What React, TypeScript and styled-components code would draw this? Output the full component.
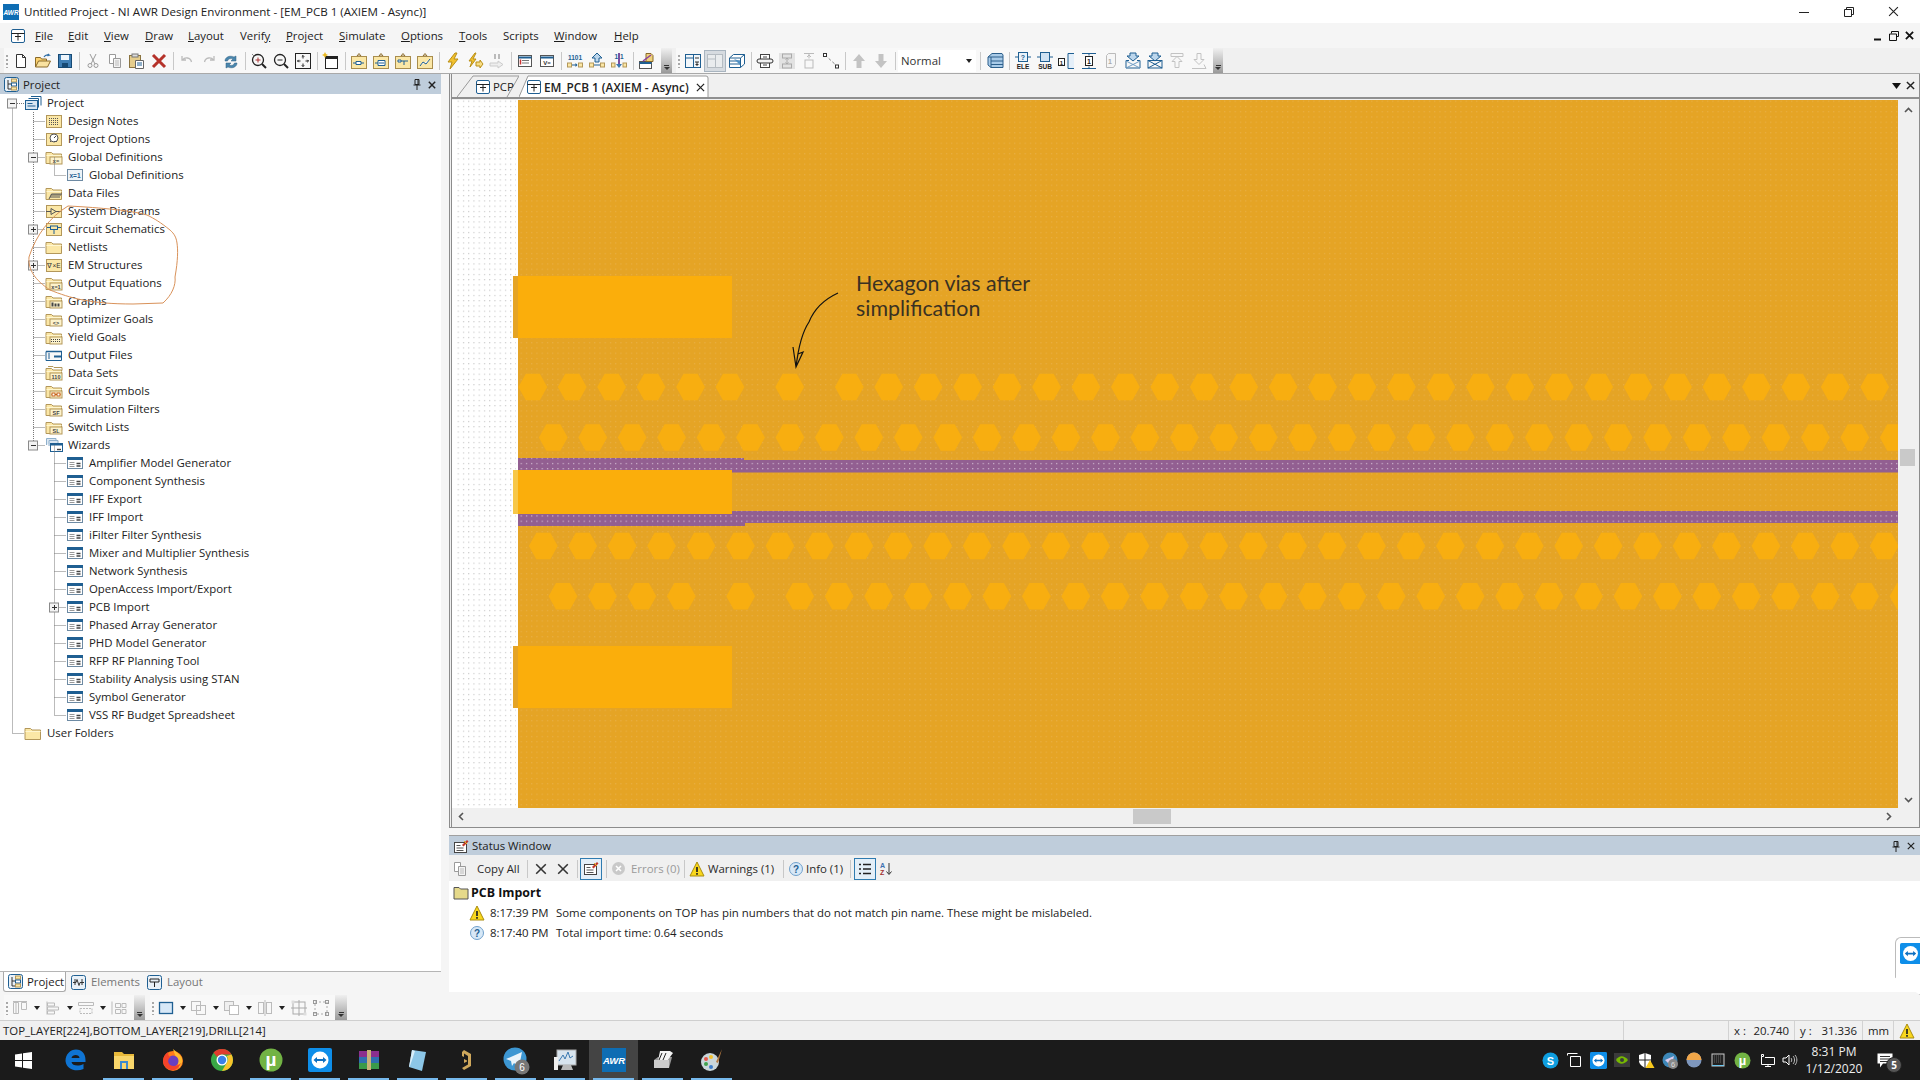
import React from "react";
import styled, { createGlobalStyle } from "styled-components";

const FONT = `"Open Sans", "Noto Sans", sans-serif`;

const Global = createGlobalStyle`
  html, body { margin: 0; padding: 0; background: #fff; overflow: hidden; }
  #root { width: 1920px; height: 1080px; }
  * { box-sizing: border-box; }
`;

const Page = styled.div`
  width: 1920px; height: 1080px; display: flex; flex-direction: column;
  font: 11.4px/16px ${FONT}; color: #1c1c1c; background: #f5f5f5;
`;
const IconSvg = styled.svg`display: block; flex: none;`;
const Tiny = styled.text<{ $s?: number; $w?: number }>`
  font-family: "Liberation Sans", sans-serif;
  font-size: ${(p) => p.$s ?? 6}px; font-weight: ${(p) => p.$w ?? 700};
`;
const S: React.FC<{ w?: number; h?: number; children?: React.ReactNode }> = ({ w = 16, h = 16, children }) => (
  <IconSvg width={w} height={h} viewBox={`0 0 ${w} ${h}`} fill="none">{children}</IconSvg>
);

/* ---------- title / menu ---------- */
const TitleBar = styled.header`height: 23px; background: #fff; display: flex; align-items: center; padding-left: 3px; flex: none;`;
const TitleText = styled.span`margin-left: 5px; font-size: 11.6px; white-space: nowrap; color: #222;`;
const WinControls = styled.div`margin-left: auto; margin-right: 4px; display: flex; align-items: center;`;
const WinBtn = styled.span`width: 45px; display: flex; justify-content: center;`;
const MenuBar = styled.nav`height: 25px; background: #f5f5f5; display: flex; align-items: center; padding-left: 10px; flex: none;`;
const MenuItem = styled.span<{ $w: number }>`width: ${(p) => p.$w}px; white-space: nowrap; flex: none;`;
const MenuIcon = styled.span`width: 25px; flex: none;`;
const MdiControls = styled.div`margin-left: auto; margin-right: 6px; display: flex; gap: 6px; align-items: center;`;

/* ---------- toolbars ---------- */
const ToolRow = styled.div`height: 26px; background: #f0f0f0; display: flex; align-items: stretch; padding-left: 4px; flex: none; border-bottom: 1px solid #a9a9a9;`;
const ToolBand = styled.div<{ $ml?: number }>`display: flex; align-items: center; background: #f8f8f8; margin-left: ${(p) => p.$ml ?? 0}px; height: 25px;`;
const Grip = styled.span`
  width: 6px; height: 14px; flex: none;
  background-image: radial-gradient(circle, #a8a8a8 1px, transparent 1.2px);
  background-size: 6px 4px;
`;
const ToolBtn = styled.span<{ $active?: boolean; $hi?: boolean }>`
  width: 22px; height: 22px; flex: none; display: flex; align-items: center; justify-content: center;
  ${(p) => p.$active ? "background: #d6dbe0; border: 1px solid #a8b4bf;" : ""}
  ${(p) => p.$hi ? "background: #e4eff8; border: 1px solid #2f7bb0;" : ""}
`;
const DropBtn = styled.span`width: 33px; height: 22px; flex: none; display: flex; align-items: center; padding-left: 1px; gap: 5px;`;
const DropArrow = styled.i`width: 0; height: 0; border: 3px solid transparent; border-top: 4px solid #222; border-bottom: 0; flex: none;`;
const Sep = styled.span<{ $w?: number }>`
  width: ${(p) => p.$w ?? 6}px; height: 18px; flex: none; position: relative;
  background: linear-gradient(#c8c8c8, #c8c8c8) center/1px 100% no-repeat;
`;
const Overflow = styled.span<{ $w?: number }>`
  width: ${(p) => p.$w ?? 11}px; height: 25px; flex: none; margin-left: 3px;
  background: linear-gradient(#f0f0f0, #9a9a9a); display: flex; flex-direction: column; align-items: center; justify-content: flex-end; padding-bottom: 3px; gap: 1px;
  &::before { content: ""; width: 5px; height: 1px; background: #333; }
  &::after { content: ""; width: 0; height: 0; border: 3px solid transparent; border-top: 3px solid #333; border-bottom: 0; }
`;
const Combo = styled.span`
  width: 78px; height: 22px; background: #fff; flex: none; display: flex; align-items: center; padding: 0 4px 0 3px; justify-content: space-between; color: #333;
`;

/* ---------- workspace ---------- */
const Workspace = styled.main`flex: 1; display: flex; min-height: 0;`;
const LeftColumn = styled.section`width: 441px; display: flex; flex-direction: column; flex: none;`;
const DockHeader = styled.div`
  height: 20px; background: #bfcddb; display: flex; align-items: center; padding: 1px 5px 0 3px; gap: 3px; flex: none; color: #222;
`;
const DockCtl = styled.span`margin-left: auto; display: flex; align-items: center; gap: 7px;`;
const Tree = styled.div`flex: 1; background: #fff; position: relative; border-bottom: 1px solid #b5b5b5;`;
const TreeLines = styled.svg`position: absolute; left: 0; top: 0; pointer-events: none;`;
const TreeRow = styled.div<{ $level: number }>`
  height: 18px; display: flex; align-items: center; gap: 5px; padding-left: ${(p) => 24 + p.$level * 21}px; color: #222; white-space: nowrap;
`;
const PanelTabs = styled.div`height: 23px; display: flex; align-items: flex-start; padding-left: 3px; flex: none; background: #f5f5f5;`;
const PanelTab = styled.span<{ $active?: boolean; $w: number }>`
  width: ${(p) => p.$w}px; height: 20px; display: flex; align-items: center; flex: none;
  color: ${(p) => (p.$active ? "#1c1c1c" : "#777")};
  gap: ${(p) => (p.$active ? 3 : 4)}px; padding-left: ${(p) => (p.$active ? 3 : 4)}px;
  ${(p) => p.$active ? "background: #fff; border: 1px solid #aaa; border-top: 0; border-radius: 0 0 3px 3px;" : ""}
`;
const BottomTools = styled.div`height: 25px; display: flex; align-items: center; padding-left: 4px; flex: none;`;

const RightColumn = styled.section`flex: 1; margin-left: 8px; display: flex; flex-direction: column; min-width: 0;`;
const DocPane = styled.div`
  height: 754px; flex: none; border-left: 3px double #8c8c8c; border-right: 1px solid #8c8c8c; border-bottom: 1px solid #8c8c8c; display: flex; flex-direction: column; background: #f0f0f0;
`;
const TabStrip = styled.div`height: 25px; flex: none; display: flex; padding-left: 5px; align-items: flex-end; border-bottom: 2px solid #8f8f8f; background: #f0f0f0;`;
const DocTab = styled.div<{ $w: number; $active?: boolean }>`
  position: relative; width: ${(p) => p.$w}px; height: 22px; flex: none; display: flex; align-items: center;
  font-weight: ${(p) => (p.$active ? 600 : 400)}; color: #222; white-space: nowrap;
  font-size: ${(p) => (p.$active ? 11.8 : 11.4)}px;
  padding: 2px 0 0 ${(p) => (p.$active ? 7 : 18)}px;
`;
const TabOutline = styled.svg`position: absolute; left: 0; top: 0; z-index: 0;`;
const TabContent = styled.span`position: relative; display: flex; align-items: center; gap: 2px;`;
const TabClose = styled.span`margin-left: 5px; display: flex;`;
const StripCtl = styled.span`margin-left: auto; display: flex; align-items: center; gap: 5px; padding: 0 4px 0 0; align-self: center;`;
const DocBody = styled.div`display: flex; height: 708px; flex: none; margin-top: 1px;`;
const CanvasWrap = styled.div`position: relative; width: 1446px; height: 708px; flex: none; overflow: hidden; background: #fff;`;
const Note = styled.div`
  position: absolute; left: 404px; top: 171px; font: 400 21.4px/25px "Lato", "Noto Sans", sans-serif; color: #3a3122; white-space: nowrap;
`;
const VScroll = styled.div`flex: 1; display: flex; flex-direction: column; align-items: center; justify-content: space-between; padding: 6px 0 4px; position: relative;`;
const VThumb = styled.span`position: absolute; left: 2px; top: 349px; width: 15px; height: 17px; background: #c9c9c9;`;
const HScroll = styled.div`height: 17px; flex: none; display: flex; align-items: center; justify-content: space-between; padding: 0 26px 0 5px; position: relative;`;
const HThumb = styled.span`position: absolute; left: 681px; top: 1px; width: 38px; height: 15px; background: #c9c9c9;`;

const StatusPane = styled.div`margin-top: 7px; height: 157px; flex: none; display: flex; flex-direction: column; background: #fff; border-top: 1px solid #a0a0a0;`;
const StatusHeader = styled.div`height: 19px; flex: none; background: #bfcddb; display: flex; align-items: center; padding: 1px 5px 0 4px; gap: 3px; color: #222;`;
const StatusTools = styled.div`height: 26px; flex: none; background: #f0f0f0; display: flex; align-items: center; padding: 1px 0 0 3px; color: #333;`;
const StatBtn = styled.span<{ $w: number; $muted?: boolean; $gap?: number; $center?: boolean }>`
  width: ${(p) => p.$w}px; flex: none; display: flex; align-items: center; gap: ${(p) => p.$gap ?? 3}px; white-space: nowrap; color: ${(p) => (p.$muted ? "#9a9a9a" : "#2a2a2a")};
  ${(p) => (p.$center ? "justify-content: center;" : "")}
`;
const LogBody = styled.div`flex: 1; padding: 2px 0 0 4px;`;
const LogGroup = styled.div`height: 20px; display: flex; align-items: center; gap: 2px; font-weight: 700; color: #111; font-size: 12.4px;`;
const LogRow = styled.div`height: 20px; display: flex; align-items: center; padding-left: 16px; white-space: nowrap; color: #222;`;
const LogTime = styled.span`width: 66px; margin-left: 5px; flex: none;`;
const SideTab = styled.div`
  position: absolute; right: 0; top: 937px; width: 25px; height: 58px; background: #fff; border: 1px solid #bbb; border-right: 0; border-radius: 6px 0 0 0; padding: 5px 0 0 4px;
  clip-path: polygon(0 0, 100% 0, 100% 100%, 0 70%);
`;

/* ---------- status + task bars ---------- */
const StatusBar = styled.footer`height: 20px; flex: none; background: #f0f0f0; border-top: 1px solid #cfcfcf; display: flex; align-items: center; padding-left: 3px; color: #222;`;
const StatusMsg = styled.span`flex: 1; white-space: nowrap;`;
const StatusCell = styled.span<{ $w: number }>`
  width: ${(p) => p.$w}px; height: 100%; flex: none; border-left: 1px solid #d2d2d2; display: flex; align-items: center; justify-content: space-between; padding: 0 5px;
`;
const TaskBar = styled.footer`height: 40px; flex: none; background: #1b1b1b; display: flex; align-items: stretch; color: #fff;`;
const StartBtn = styled.span`width: 50px; display: flex; align-items: center; justify-content: center; padding-right: 4px; flex: none;`;
const TaskSlot = styled.span<{ $open?: boolean; $cur?: boolean }>`
  width: 49px; flex: none; display: flex; align-items: center; justify-content: center; position: relative;
  background: ${(p) => (p.$cur ? "#444" : "transparent")};
  ${(p) => p.$open ? `&::after { content: ""; position: absolute; left: 4px; right: 4px; bottom: 0; height: 2px; background: #76b9ed; }` : ""}
`;
const Tray = styled.div`margin-left: auto; display: flex; align-items: center; flex: none;`;
const TraySlot = styled.span`width: 24px; display: flex; justify-content: center;`;
const Clock = styled.span`width: 64px; text-align: center; font-size: 12px; line-height: 17px; color: #eee;`;
const Notify = styled.span`width: 38px; margin-right: 16px; display: flex; justify-content: center; position: relative;`;
const NotifyBadge = styled.span`
  position: absolute; left: 20px; top: 4px; width: 16px; height: 16px; border-radius: 50%; background: #555; border: 1px solid #222; font-size: 10px; line-height: 14px; text-align: center; color: #fff; font-weight: 700;
`;

/* ---------- small icons ---------- */
const B = "#1f5f92";
const TAN = "#b3975a";
const Y = "#fbe7a6";
const G = "#9a9a9a";

const FolderBase: React.FC<{ children?: React.ReactNode; stack?: boolean }> = ({ children, stack }) => (
  <S w={18} h={16}>
    {stack && <path d="M3 1.500h5l1 1h8v3" stroke={TAN} />}
    <path d="M1 3.500h5.500l1.500 1.500h8.500v9.500H1z" fill={Y} stroke={TAN} />
    <path d="M1.500 6.500h15" stroke="#fff6d0" />
    {children}
  </S>
);
const TanBox: React.FC<{ children?: React.ReactNode }> = ({ children }) => (
  <S w={18} h={16}><rect x="1.500" y="2.500" width="15" height="12" fill={Y} stroke={TAN} />{children}</S>
);
const LabelBox: React.FC<{ t: string }> = ({ t }) => (
  <><rect x="5" y="8" width="12" height="7" fill="#fdf3cc" stroke={TAN} /><Tiny x="11" y="13.500" textAnchor="middle" $s={5.500} fill="#444">{t}</Tiny></>
);
const WizardIcon = () => (
  <S w={18} h={16}>
    <rect x="1.500" y="2.500" width="15" height="11" fill="#fff" stroke="#6d8aa3" />
    <rect x="1" y="2" width="16" height="3" fill={B} />
    <path d="M3.500 7.500h5M3.500 9.500h5M3.500 11.500h5" stroke="#999" />
    <path d="M10.500 8.500h4M10.500 11h4" stroke="#444" strokeWidth="1.400" />
  </S>
);
const tree: Record<string, React.ReactElement> = {
  root: <S w={18} h={16}><path d="M7 1.500h10v9M4.500 3.500h10v9" stroke={B} /><rect x="1.500" y="5.500" width="12" height="9" fill="#d9e6f2" stroke={B} /><path d="M3.500 8.500h5M3.500 11h8" stroke={B} /></S>,
  notes: <TanBox><path d="M4 5.500h10M4 7.500h10M4 9.500h10M4 11.500h10" stroke="#555" strokeDasharray="1 1" /></TanBox>,
  opts: <TanBox><circle cx="9" cy="7" r="4" stroke="#555" fill="#fff" /><path d="M5 10.500h8" stroke="#555" strokeDasharray="1 1" /><path d="M9 7l2-2" stroke="#444" /></TanBox>,
  gdef: <FolderBase><LabelBox t="x=" /></FolderBase>,
  xeq: <S w={18} h={16}><rect x="1.500" y="2.500" width="15" height="11" fill="#eef3f8" stroke="#6d8aa3" /><Tiny x="9" y="10.500" textAnchor="middle" $s={6.500} fill={B}>x=1</Tiny></S>,
  data: <FolderBase><path d="M4 14l2.500-5H17M5 12h10M6 10h10" stroke="#555" /></FolderBase>,
  sys: <TanBox><path d="M1 8.500h5M11 8.500h5M6 5.500v6l5-3z" stroke="#555" /></TanBox>,
  sch: <TanBox><rect x="5.500" y="5" width="7" height="3.500" stroke={B} /><path d="M2 6.500h3.500M12.500 6.500H16M9 8.500V13" stroke={B} /></TanBox>,
  net: <FolderBase />,
  em: <TanBox><Tiny x="9" y="11" textAnchor="middle" $s={6.500} $w={400} fill="#333">∇×E</Tiny></TanBox>,
  oeq: <FolderBase><LabelBox t="x=1" /></FolderBase>,
  gra: <FolderBase><rect x="5" y="8" width="12" height="7" fill="#fdf3cc" stroke={TAN} /><path d="M7.500 13.500v-4M10.500 13.500v-3M13.500 13.500v-3" stroke="#444" strokeWidth="2" /></FolderBase>,
  opt: <FolderBase><LabelBox t="<>" /></FolderBase>,
  yld: <FolderBase><rect x="5" y="8" width="12" height="7" fill="#fdf3cc" stroke={TAN} /><path d="M6 10.500h10M6 12.500h10" stroke="#444" strokeDasharray="1 1" /></FolderBase>,
  out: <S w={18} h={16}><path d="M1 4.500h15.500v9H1z" fill="#f7f7f7" stroke={B} /><path d="M1 4.500h16" stroke={B} strokeWidth="1.500" /><path d="M4 6v6" stroke={B} /><rect x="9" y="8.500" width="7" height="2" fill={B} /></S>,
  sets: <FolderBase stack><LabelBox t="110" /></FolderBase>,
  sym: <FolderBase><rect x="5" y="8" width="12" height="7" fill="#fdf3cc" stroke={TAN} /><path d="M6.500 11.500h9" stroke="#c4611a" strokeWidth="1" /><rect x="7" y="10" width="3" height="3" fill="#fff" stroke="#c4611a" /><rect x="12" y="10" width="3" height="3" fill="#fff" stroke="#c4611a" /></FolderBase>,
  sf: <FolderBase><LabelBox t="SF" /></FolderBase>,
  sl: <FolderBase><LabelBox t="SL" /></FolderBase>,
  wiz: <S w={18} h={16}><path d="M1.500 8V1.500H11V4M4 9V3.500h9V6" stroke="#8fb0cc" fill="#dbe7f2" /><rect x="5.500" y="6.500" width="12" height="8" fill="#fff" stroke={B} /><rect x="5" y="6" width="13" height="2.500" fill={B} /><path d="M12 12.500h4" stroke="#444" strokeWidth="1.400" /></S>,
  item: <WizardIcon />,
  user: <FolderBase />,
};

const DocBlue = () => (
  <S><rect x="1.500" y="1.500" width="13" height="13" rx="1.500" fill="#fff" stroke={B} /><path d="M1.500 5.500h13M8 5.500v7M5 8.500h6" stroke="#222" /></S>
);
const ProjectIcon = () => (
  <S w={17} h={17}><rect x="1.500" y="1.500" width="14" height="14" rx="2" fill="#e9f1f8" stroke={B} /><path d="M5 4v9h3M5 8h3" stroke="#333" /><rect x="8.500" y="3" width="5" height="3" fill={Y} stroke={TAN} /><rect x="8.500" y="7" width="5" height="3" fill="#fff" stroke={B} /><rect x="8.500" y="11" width="5" height="3" fill={Y} stroke={TAN} /></S>
);
const ElementsIcon = () => (
  <S w={17} h={17}><rect x="1.500" y="1.500" width="14" height="14" rx="2" fill="#e9f1f8" stroke={B} /><path d="M3 8.500h3l1-3 2 6 1-3h4M5 5v6M12 5v6" stroke="#333" /></S>
);
const LayoutIcon = () => (
  <S w={17} h={17}><rect x="1.500" y="1.500" width="14" height="14" rx="2" fill="#e9f1f8" stroke={B} /><path d="M4 5h9v3H4zM8.500 8v5" stroke="#222" /></S>
);
const YBox: React.FC<{ d: string }> = ({ d }) => (
  <S w={18} h={18}>
    <path d="M9 1.500l2 2.500H7z" fill="#fff" stroke="#8a6a2a" />
    <rect x="1.500" y="4.500" width="15" height="12" fill={Y} stroke="#a98d4d" />
    <path d={d} stroke={B} fill="#fff" />
  </S>
);
const Bits: React.FC<{ t: string; tone?: string }> = ({ t, tone = B }) => (
  <S w={18} h={18}>
    <rect x="1" y="1" width="16" height="7.500" fill="#f3f7fb" />
    <Tiny x="9" y="7.500" textAnchor="middle" $s={6.500} fill={tone}>{t}</Tiny>
    <rect x="1.500" y="11" width="4" height="4" fill={Y} stroke={TAN} />
    <path d="M6 13h5" stroke={B} /><path d="M9.500 11l2 2-2 2" fill={B} />
    <rect x="12.500" y="11" width="4" height="4" fill={Y} stroke={TAN} />
  </S>
);

const tb: Record<string, React.ReactElement> = {
  new: <S><path d="M3.500 1.500h6l3 3v10h-9z" fill="#fff" stroke="#333" /><path d="M9.500 1.500v3h3" stroke="#333" /></S>,
  open: <S w={18}><path d="M1.500 14V4.500h5l1 1.500h5v2" fill="#fcd26f" stroke="#8a6a2a" /><path d="M1.500 14l3-6h12l-3 6z" fill="#f9e2a0" stroke="#8a6a2a" /><path d="M10 4c1-2 3-2.500 5-2l-1-1M15 2l-1.500 1" stroke="#2f6ea8" strokeWidth="1.200" /></S>,
  save: <S><rect x="1.500" y="1.500" width="13" height="13" fill="#3f7fb5" stroke="#174a74" /><rect x="4" y="2" width="8" height="5" fill="#eef5fb" /><rect x="5" y="10" width="6" height="4.500" fill="#174a74" /></S>,
  cut: <S><circle cx="5" cy="12.500" r="2" stroke={G} /><circle cx="11" cy="12.500" r="2" stroke={G} /><path d="M6 11l5-10M10 11L5 1" stroke={G} /></S>,
  copy: <S><path d="M2.500 1.500h6v9h-6z" fill="#fff" stroke={G} /><path d="M6.500 5.500h7v9h-7z" fill="#f3f3f3" stroke={G} /><path d="M8 8h4M8 10h4M8 12h4" stroke="#bbb" /></S>,
  paste: <S w={18}><rect x="1.500" y="2.500" width="11" height="12" fill="#e5cd8d" stroke="#8a7340" /><rect x="4" y="1" width="6" height="3" fill="#ddd" stroke="#777" /><path d="M7.500 7.500h8v8h-8z" fill="#fff" stroke="#666" /><path d="M9 10h5M9 12h5" stroke={B} /></S>,
  del: <S w={18} h={18}><path d="M3 3l12 12M15 3L3 15" stroke="#b5322a" strokeWidth="3" /></S>,
  undo: <S><path d="M3 3v4h4M3.500 7c2-3 8-3 9 2" stroke="#bbb" strokeWidth="1.300" /></S>,
  redo: <S><path d="M13 3v4H9M12.500 7c-2-3-8-3-9 2" stroke="#bbb" strokeWidth="1.300" /></S>,
  refresh: <S w={18}><path d="M3 8c0-4 5-6 9-4l2-1v5h-5l2-2c-3-1-5 0-5.500 2zM15 10c0 4-5 6-9 4l-2 1v-5h5l-2 2c3 1 5 0 5.500-2z" fill="#4a86ad" stroke="#2f5e80" strokeWidth=".5" /></S>,
  zoomA: <S w={18} h={18}><circle cx="8" cy="8" r="5.500" stroke="#222" strokeWidth="1.300" /><path d="M12 12l4 4" stroke="#222" strokeWidth="2" /><path d="M5.500 8h5M8 5.500v5" stroke="#a33" /><path d="M2 2l3 3" stroke="#888" /></S>,
  zoomO: <S w={18} h={18}><circle cx="8" cy="8" r="5.500" stroke="#222" strokeWidth="1.300" /><path d="M12 12l4 4" stroke="#222" strokeWidth="2" /><path d="M5.500 8h5" stroke="#222" /></S>,
  fit: <S w={18} h={18}><rect x="1.500" y="1.500" width="15" height="15" stroke="#222" /><path d="M9 3.500v3M7.800 4.700L9 3.500l1.200 1.200M9 14.500v-3M7.800 13.300L9 14.500l1.200-1.200M3.500 9h3M4.700 7.800L3.500 9l1.200 1.200M14.500 9h-3M13.300 7.800l1.200 1.200-1.200 1.200" stroke="#222" /></S>,
  newLay: <S w={18} h={18}><rect x="3.500" y="4.500" width="12" height="12" fill="#fff" stroke="#222" /><path d="M3.500 6h12" stroke="#222" strokeWidth="2" /><path d="M3 0l1 2 2 1-2 1-1 2-1-2-2-1 2-1z" fill="#e9b821" /></S>,
  y1: <YBox d="M3 11h3M6 9.500h5v3H6zM11 11h3" />,
  y2: <YBox d="M3 11h3M6 8.500h7v5H6zM7 11h5" />,
  y3: <YBox d="M4 8h3v2H4zM7 9h7M10 9v4" />,
  y4: <YBox d="M4 14l3-4 3 2 4-5" />,
  bolt: <S w={18} h={18}><path d="M11 1L4 10h4l-2 7 8-10h-4l3-6z" fill="#f2c12e" stroke="#b98f17" /></S>,
  boltA: <S w={18} h={18}><path d="M9 1L3 9h3l-2 6 6-8H7l3-6z" fill="#f2c12e" stroke="#b98f17" /><path d="M10 10h4v-2l3 4-3 4v-2h-4z" fill="#f7dc84" stroke="#b98f17" /></S>,
  pause: <S w={18} h={18}><path d="M7 2v5M11 2v5" stroke="#bbb" strokeWidth="2" /><path d="M2 11h8v-2l5 3.500-5 3.500v-2H2z" fill="#eee" stroke="#ccc" /></S>,
  prop: <S w={18}><rect x="2.500" y="2.500" width="13" height="11" fill="#fff" stroke="#555" /><path d="M2.500 4.500h13" stroke={B} strokeWidth="2" /><path d="M6 7.500h7M6 10h7" stroke="#777" /><path d="M4.500 6.500v5" stroke="#c33" strokeWidth="1.500" /></S>,
  veq: <S w={18}><rect x="2.500" y="2.500" width="13" height="11" fill="#fff" stroke="#555" /><path d="M2.500 4.500h13" stroke={B} strokeWidth="2" /><Tiny x="9" y="11.500" textAnchor="middle" $s={6} fill="#333">V=</Tiny></S>,
  b1: <Bits t="1101" />,
  b2: <S w={18} h={18}><path d="M9 1l5 5h-3v4H7V6H4z" fill="#bcd6ec" stroke={B} /><rect x="1.500" y="11" width="4" height="4" fill={Y} stroke={TAN} /><path d="M6 13h6" stroke={B} /><rect x="12.500" y="11" width="4" height="4" fill={Y} stroke={TAN} /></S>,
  b3: <S w={18} h={18}><Tiny x="9" y="7" textAnchor="middle" $s={6.500} fill={B}>1 1</Tiny><path d="M9 1v11" stroke="#7a4fa0" strokeWidth="2" /><path d="M6 12l3 4 3-4z" fill="#3a78b0" /><rect x="1.500" y="11" width="3.500" height="4" fill={Y} stroke={TAN} /><rect x="13" y="11" width="3.500" height="4" fill={Y} stroke={TAN} /></S>,
  wand: <S w={18} h={18}><rect x="1.500" y="9.500" width="12" height="7" fill="#fff" stroke="#555" /><path d="M1.500 11h12" stroke={B} strokeWidth="2" /><path d="M8 1.500h5l2 2v6H8z" fill="#f0d27c" stroke="#8a6a2a" /><path d="M5 9l8-6" stroke="#8a3fa0" strokeWidth="1.500" /></S>,
  a1: <S w={18}><rect x="1.500" y="1.500" width="15" height="13" fill="#f2f7fb" stroke={B} /><path d="M1.500 5h8v9.500M9.500 5V1.500" stroke={B} /><path d="M11 5h4M11 9h4M13 9v4M11.500 11.500h3" stroke="#333" /></S>,
  a2: <S w={18}><rect x="1.500" y="1.500" width="15" height="13" fill="#e9ecee" stroke="#b5bcc2" /><path d="M1.500 6h8v8.500M9.500 6V1.500" stroke="#b5bcc2" /></S>,
  a3: <S w={18}><path d="M1.500 5l4-3.500h11V11l-4 3.500h-11z" fill="#fff" stroke={B} /><path d="M1.500 5h11v9.500M12.500 5l4-3.500" stroke={B} /><path d="M2 8h10M2 11h10" stroke={B} /><path d="M6 6l6 6v-4z" fill="#4f90c4" /></S>,
  b4: <S w={18}><rect x="4.500" y="1.500" width="9" height="5" fill="#fff" stroke="#444" /><rect x="4.500" y="9.500" width="9" height="5" fill="#fff" stroke="#444" /><rect x="1" y="6" width="16" height="4" rx="2" fill="#f3f3f3" stroke="#333" /><path d="M7 4h4M7 12h4" stroke="#444" /></S>,
  b5: <S w={18} h={18}><rect x="1" y="1" width="16" height="16" fill="#e2e2e2" /><rect x="4.500" y="2" width="9" height="4" stroke="#aaa" /><rect x="4.500" y="12" width="9" height="4" stroke="#aaa" /><path d="M9 6v6M7.500 7.500L9 6l1.500 1.500M7.500 10.500L9 12l1.500-1.500" stroke="#aaa" /></S>,
  b6: <S w={18} h={18}><path d="M4 1.500h10M9 1.500v5" stroke="#bbb" /><path d="M7 5l2-2 2 2" stroke="#bbb" /><rect x="5" y="8" width="8" height="8" stroke="#bbb" /></S>,
  b7: <S w={18} h={18}><path d="M3 3l13 12" stroke="#888" strokeDasharray="3 2" /><rect x="1.500" y="1.500" width="3" height="3" fill="#fff" stroke="#333" /><rect x="13.500" y="13" width="3" height="3" fill="#fff" stroke="#333" /></S>,
  up: <S w={18} h={18}><path d="M9 2l6 7h-3.500v7h-5V9H3z" fill="#c3c3c3" /></S>,
  down: <S w={18} h={18}><path d="M9 16l6-7h-3.500V2h-5v7H3z" fill="#c3c3c3" /></S>,
  db: <S w={18} h={18}><path d="M2 5l4-3.500h10L17 3v12.500H5L2 13z" fill="#a9cbe8" stroke="#2c5f8b" /><path d="M5 5v10.500M2 5h15M5 9h12M5 12.500h12" stroke="#2c5f8b" /></S>,
  ele: <S w={18} h={20}><rect x="4.500" y="1.500" width="9" height="9" fill="#eaf2f9" stroke={B} /><path d="M1 6h3.500M13.500 6H17" stroke={B} /><Tiny x="9" y="8.500" textAnchor="middle" $s={7} fill={B}>?</Tiny><Tiny x="9" y="18" textAnchor="middle" $s={6.500} fill="#222">ELE</Tiny></S>,
  sub: <S w={18} h={20}><rect x="4.500" y="1.500" width="9" height="9" fill="#cfe2f3" stroke={B} /><path d="M1 6h3.500M13.500 6H17" stroke={B} /><Tiny x="9" y="18" textAnchor="middle" $s={6.500} fill="#222">SUB</Tiny></S>,
  p1: <S w={20} h={18}><rect x="1.500" y="6.500" width="6" height="7" fill="#fff" stroke="#222" /><Tiny x="4.500" y="12.500" textAnchor="middle" $s={6} fill="#222">1</Tiny><path d="M17 1.500h-6v15h6" fill="#e4eff9" stroke={B} /></S>,
  p2: <S w={18} h={18}><path d="M2 1.500h14M2 16.500h14M9 1.500v2M9 14.500v2" stroke={B} /><rect x="5.500" y="4.500" width="7" height="9" fill="#fff" stroke="#222" /><Tiny x="9" y="12" textAnchor="middle" $s={7} fill="#222">1</Tiny></S>,
  p3: <S w={18} h={18}><path d="M4.500 3.500l2-2h7v11l-2 3h-7z" fill="#f6f6f6" stroke="#bbb" /><Tiny x="8" y="12" textAnchor="middle" $s={7} fill="#aaa">1</Tiny></S>,
  ex1: <S w={18} h={18}><path d="M6 1h6v3h3l-6 5-6-5h3z" fill="#bcd6ec" stroke={B} /><path d="M2 8.500v7.500h14V8.500h-3M2 8.500h3" stroke={B} /><path d="M2 16l14-7M2 9l14 7" stroke="#6d9cc4" /></S>,
  ex2: <S w={18} h={18}><path d="M6 1h6v3h3l-6 5-6-5h3z" fill="#bcd6ec" stroke={B} /><rect x="2" y="8.500" width="14" height="7.500" stroke={B} /><path d="M2 16l14-7.500M2 8.500l14 7.500" stroke={B} /></S>,
  ex3: <S w={18} h={18}><path d="M3 1.500h12v3H3zM9 4.500l5 5h-3v6H7v-6H4z" stroke="#c3c3c3" /></S>,
  ex4: <S w={18} h={18}><path d="M7 1.500h4v6h3l-5 5-5-5h3zM2 16.500h14l-2-4" stroke="#c3c3c3" /></S>,
  s1: <S w={18}><path d="M2.500 2.500v11h5v-11zM5 2.500v11M10.500 2.500v7h5v-7zM2 1.500h14" stroke="#bbb" /></S>,
  s2: <S w={18}><path d="M3 1.500v13M3.500 3h7v3h-7zM3.500 7h11v3h-11zM3.500 11h7v3h-7z" stroke="#bbb" /></S>,
  s3: <S w={18}><path d="M1.500 2.500h15v3h-15z" stroke="#bbb" /><path d="M3 8.500h12v5H3z" stroke="#bbb" strokeDasharray="2 1" /></S>,
  s4: <S w={18}><path d="M1 1.500v13M4.500 3.500h5v4h-5zM11 3.500h4v4h-4zM4.500 9.500h5v4h-5zM11 9.500h4v4h-4z" stroke="#bbb" /></S>,
  r1: <S w={18}><rect x="2.500" y="2.500" width="13" height="11" fill="#d7e8f7" stroke={B} strokeWidth="1.300" /></S>,
  r2: <S w={18}><rect x="1.500" y="1.500" width="9" height="9" stroke="#bbb" /><rect x="6.500" y="5.500" width="9" height="9" stroke="#bbb" /></S>,
  r3: <S w={18}><rect x="1.500" y="1.500" width="9" height="9" fill="#efefef" stroke="#bbb" /><rect x="6.500" y="5.500" width="9" height="9" fill="#fff" stroke="#bbb" /></S>,
  r4: <S w={18}><rect x="2.500" y="2.500" width="5" height="11" stroke="#bbb" /><rect x="10.500" y="2.500" width="5" height="11" stroke="#bbb" /><path d="M9 0v16" stroke="#bbb" /></S>,
  r5: <S w={18} h={18}><rect x="3" y="3" width="12" height="12" stroke="#aaa" /><path d="M9 1v16M1 9h16" stroke="#aaa" /><rect x="1.500" y="1.500" width="3" height="3" fill="#ddd" /><rect x="13.500" y="13.500" width="3" height="3" fill="#ddd" /></S>,
  r6: <S w={18} h={18}><rect x="3" y="3" width="12" height="12" stroke="#aaa" strokeDasharray="2 2" /><rect x="1.500" y="1.500" width="3" height="3" stroke="#999" /><rect x="13.500" y="1.500" width="3" height="3" stroke="#999" /><rect x="1.500" y="13.500" width="3" height="3" stroke="#999" /><rect x="13.500" y="13.500" width="3" height="3" stroke="#999" /></S>,
};

const Warn: React.FC<{ s?: number }> = ({ s = 16 }) => (
  <IconSvg width={s} height={s} viewBox="0 0 16 16" fill="none">
    <path d="M8 1l7 14H1z" fill="#f9d71c" stroke="#a98c10" />
    <path d="M8 6v5" stroke="#222" strokeWidth="1.700" /><path d="M8 12v1.700" stroke="#222" strokeWidth="1.700" />
  </IconSvg>
);
const Info = () => (
  <S><circle cx="8" cy="8" r="6.500" fill="#d7e8f7" stroke="#6fa0cc" /><Tiny x="8" y="12" textAnchor="middle" $s={10} fill="#1f5f92">?</Tiny></S>
);
const StatusIcon = () => (
  <S w={16} h={15}><rect x="1.500" y="3.500" width="12" height="10" fill="#fff" stroke="#444" /><path d="M3.500 6.500h4M3.500 9h7M3.500 11.500h7" stroke="#555" /><path d="M9 6l5-5 1.500 1.500-5 5z" fill="#c0392b" /><path d="M11 2l3 3" stroke="#e9b821" /></S>
);
const X: React.FC<{ s?: number; w?: number; c?: string }> = ({ s = 10, w = 1.500, c = "#222" }) => (
  <IconSvg width={s} height={s} viewBox="0 0 10 10" fill="none"><path d="M1 1l8 8M9 1L1 9" stroke={c} strokeWidth={w} /></IconSvg>
);
const Pin = () => (
  <IconSvg width={8} height={11} viewBox="0 0 8 11" fill="none"><path d="M2 .5h4v5H2zM.5 6h7M4 6v5M5 .5v5" stroke="#222" /></IconSvg>
);
const Chevron: React.FC<{ d: string }> = ({ d }) => (
  <IconSvg width={9} height={9} viewBox="0 0 9 9" fill="none"><path d={d} stroke="#555" strokeWidth="1.600" /></IconSvg>
);

/* ---------- taskbar icons ---------- */
const TV: React.FC<{ s?: number }> = ({ s = 24 }) => (
  <IconSvg width={s} height={s} viewBox="0 0 24 24">
    <rect width="24" height="24" rx="2" fill="#0e8ee9" />
    <circle cx="12" cy="12" r="8.500" fill="#fff" />
    <path d="M5.500 12l3.500-3v2h6V9l3.500 3-3.500 3v-2H9v2z" fill="#0e6fc0" />
  </IconSvg>
);
const task: { n: string; open?: boolean; cur?: boolean; el: React.ReactElement }[] = [
  { n: "edge", el: <S w={24} h={24}><path d="M2.500 13C2.500 6 7.500 1.500 13 1.500c6 0 9.500 4.500 9.500 10.500v2H8.500c.5 3.500 6.500 5 12 2v5c-7 3-17 1-18-8zM8.500 10h8c0-4-7.500-4-8 0z" fill="#0f74d3" /></S> },
  { n: "explorer", open: true, el: <S w={24} h={24}><path d="M2 4h8l2 2h10v3H2z" fill="#e8b93a" /><rect x="2" y="8" width="20" height="13" fill="#f9d66b" /><rect x="8" y="13" width="8" height="8" fill="#3b8ad0" /><rect x="10" y="15" width="4" height="6" fill="#f9d66b" /></S> },
  { n: "firefox", open: true, el: <S w={24} h={24}><circle cx="12" cy="13" r="10" fill="#ff7a1a" /><path d="M12 1c3 3 7 5 9 9 1 4-1 8-3 10-1-7-4-12-6-19z" fill="#ffb92e" /><circle cx="12" cy="13" r="5.500" fill="#6a3fc0" /><path d="M2 13c0-4 2-7 5-9 0 3 1 5 3 5-3 1-4 5-1 8 3 2 8 1 11-2-2 5-6 8-10 7-5-1-8-5-8-9z" fill="#f5432a" /></S> },
  { n: "chrome", el: <S w={24} h={24}><circle cx="12" cy="12" r="11" fill="#39a845" /><path d="M12 1a11 11 0 0 1 9.500 5.500H12A5.500 5.500 0 0 0 7 9L3.500 4.500A11 11 0 0 1 12 1z" fill="#df3b2d" /><path d="M21.500 6.500A11 11 0 0 1 12 23l4.800-8.300A5.500 5.500 0 0 0 16.500 8z" fill="#f9c32b" /><circle cx="12" cy="12" r="5.500" fill="#fff" /><circle cx="12" cy="12" r="4.200" fill="#3a80e8" /></S> },
  { n: "utorrent", open: true, el: <S w={24} h={24}><circle cx="12" cy="12" r="11.500" fill="#72b344" /><Tiny x="12" y="18" textAnchor="middle" $s={19} fill="#fff">µ</Tiny></S> },
  { n: "teamviewer", open: true, el: <TV /> },
  { n: "winrar", open: true, el: <S w={24} h={24}><rect x="2" y="3" width="20" height="6" fill="#8b2f8e" /><rect x="2" y="9" width="20" height="6" fill="#2f6fb0" /><rect x="2" y="15" width="20" height="6" fill="#3b9a4a" /><rect x="10" y="2" width="4" height="20" fill="#c9b27a" /></S> },
  { n: "notepad", open: true, el: <S w={24} h={24}><path d="M6 2l14 2-4 19-13-4z" fill="#8cc7e8" /><path d="M6 2l3 1-5 15-1 1z" fill="#d8eef9" /></S> },
  { n: "d", open: true, el: <S w={24} h={24}><path d="M9 2l7 4v12l-7 4-2-2 6-3.500V8L9 5.500V9L7 8V4z" fill="#cfa85c" /><path d="M9 11l3 1.500v1L9 15z" fill="#cfa85c" /></S> },
  { n: "telegram", open: true, el: <S w={30} h={30}><circle cx="14" cy="14" r="11.500" fill="#3d97d3" /><path d="M5 14l16-7-3 15-5-4-2 3-1-5z" fill="#eaf4fb" /><circle cx="21" cy="22" r="7.500" fill="#777" /><Tiny x="21" y="25.500" textAnchor="middle" $s={10} $w={400} fill="#fff">6</Tiny></S> },
  { n: "perf", open: true, el: <S w={26} h={26}><rect x="5" y="3" width="19" height="15" fill="#d8e4ee" stroke="#aaa" /><path d="M7 14l4-6 2 4 3-7 2 6 3-2" stroke="#3a78b0" /><path d="M11 18h8l2 5H9z" fill="#bbb" /><path d="M2 10h4v13H2z" fill="#eee" /></S> },
  { n: "awr", open: true, cur: true, el: <S w={24} h={24}><rect width="24" height="24" fill="#0e6db3" /><Tiny x="12" y="16" textAnchor="middle" $s={9.500} fill="#fff" fontStyle="italic">AWR</Tiny></S> },
  { n: "printer", open: true, el: <S w={24} h={24}><path d="M3 12l4-3h14l-1 4-2 7H3z" fill="#999" /><path d="M9 3h10l3 2-6 8H7z" fill="#f4f4f4" /><path d="M3 12h15v8H3z" fill="#ccc" /><path d="M11 5l-3 7M15 5l-3 7" stroke="#222" /></S> },
  { n: "paint", open: true, el: <S w={24} h={24}><ellipse cx="10" cy="14" rx="9" ry="9" fill="#c9d6da" /><circle cx="6" cy="11" r="2" fill="#e4574b" /><circle cx="6" cy="16" r="2" fill="#3fa24e" /><circle cx="11" cy="19" r="2" fill="#3d7cc9" /><circle cx="11" cy="9" r="2" fill="#f2c12e" /><path d="M22 1l-6 13 2 1z" fill="#b4783e" /></S> },
];

const tray: React.ReactElement[] = [
  <S w={17} h={17}><circle cx="8.500" cy="8.500" r="8" fill="#0e9ee0" /><Tiny x="8.500" y="12.500" textAnchor="middle" $s={11} fill="#fff">S</Tiny></S>,
  <S><path d="M1.500 3.500V1.500h10M4.500 4.500h10v10h-10z" stroke="#fff" /></S>,
  <TV s={17} />,
  <S w={16} h={14}><rect width="16" height="14" fill="#3b3b3b" /><path d="M2 7c3-5 8-5 12 0-4 5-9 5-12 0z" fill="#76b900" /><circle cx="8" cy="7" r="2" fill="#3b3b3b" /></S>,
  <S w={18} h={17}><path d="M8 1l6 2v6c0 3-3 5-6 7-3-2-6-4-6-7V3z" fill="#fff" /><path d="M8 1v15M2 8h12" stroke="#222" /><path d="M13 8l4.500 8h-9z" fill="#f9c91c" /></S>,
  <S w={17} h={17}><circle cx="8" cy="8" r="7.500" fill="#3d87b8" /><path d="M3 8l9-4-2 8-2-2-1 2z" fill="#dce" /><circle cx="11" cy="12" r="5" fill="#888" /><Tiny x="11" y="15" textAnchor="middle" $s={7.500} $w={400} fill="#ddd">6</Tiny></S>,
  <S w={16} h={16}><circle cx="8" cy="8" r="7.500" fill="#7e97bd" /><path d="M.500 8a7.500 7.500 0 0 1 15 0z" fill="#f1a648" /></S>,
  <S w={14} h={14}><rect x="1" y="1" width="12" height="12" fill="#222" stroke="#ccc" /><path d="M3 3h8M3 5h8M3 7h8M3 9h8" stroke="#666" strokeDasharray="1 1" /><path d="M1 12.500h12" stroke="#6cc7ef" /></S>,
  <S w={17} h={17}><circle cx="8.500" cy="8.500" r="8" fill="#72b344" /><Tiny x="8.500" y="13" textAnchor="middle" $s={13} fill="#fff">µ</Tiny></S>,
  <S w={17} h={15}><path d="M3.500 1.500h2v2h-2zM7 4.500h9.500v7h-13V3.500M10 11.500v2M7 13.500h6" stroke="#fff" /></S>,
  <S w={16} h={14}><path d="M1 5h3l3-3v10L4 9H1z" stroke="#fff" /><path d="M9 5c1 1 1 3 0 4M11 3c2 2 2 6 0 8M13 2c2.500 3 2.500 7 0 10" stroke="#bbb" /></S>,
];

/* ---------- the PCB drawing ---------- */
const PITCH = 39.44;
const range = (a: number, n: number) => Array.from({ length: n }, (_, i) => a + i * PITCH);
const hexRows: { y: number; xs: number[] }[] = [
  { y: 387, xs: [...range(532.8, 6), 789.7, ...range(849.3, 27)] },
  { y: 437.5, xs: range(553.3, 35) },
  { y: 546, xs: range(543.3, 35) },
  { y: 596.3, xs: [...range(563, 4), 740.7, ...range(799.7, 29)] },
];
const hex = (x: number, y: number) =>
  `${x - 14.4},${y} ${x - 7},${y - 13.3} ${x + 7},${y - 13.3} ${x + 14.4},${y} ${x + 7},${y + 13.3} ${x - 7},${y + 13.3}`;

const Board = () => (
  <IconSvg width={1446} height={708} viewBox="452 100 1446 708">
    <defs>
      <pattern id="gridW" width="5.25" height="5.25" patternUnits="userSpaceOnUse">
        <rect x="1" y="1" width="1" height="1" fill="#b4b4b4" />
      </pattern>
      <pattern id="gridO" width="5.25" height="5.25" patternUnits="userSpaceOnUse">
        <rect x="1" y="1" width="1" height="1" fill="#e9b350" />
      </pattern>
      <pattern id="gridP" width="5.25" height="5.25" patternUnits="userSpaceOnUse">
        <rect x="1" y="1" width="1" height="1" fill="#e9dbe8" />
      </pattern>
    </defs>
    <rect x="452" y="100" width="66" height="708" fill="#fff" />
    <rect x="454" y="100" width="62" height="706" fill="url(#gridW)" />
    <rect x="518" y="100" width="1380" height="708" fill="#e5a425" />
    <rect x="518" y="100" width="1380" height="708" fill="url(#gridO)" />
    <path d="M518 458H744V460H1898V472.500H518zM518 514H732V511H1898V523H745V526H518z" fill="#925f91" />
    <path d="M518 458H744V460H1898V472.500H518zM518 514H732V511H1898V523H745V526H518z" fill="url(#gridP)" />
    {hexRows.map((r) => r.xs.map((x) => <polygon key={`${r.y}-${x}`} points={hex(x, r.y)} fill="#f8ae10" />))}
    <rect x="513" y="276" width="5" height="62" fill="#e5a425" />
    <rect x="518" y="276" width="214" height="62" fill="#fbae0b" />
    <rect x="513" y="470" width="5" height="44" fill="#f7c748" />
    <rect x="518" y="470" width="214" height="44" fill="#fbae0b" />
    <rect x="513" y="646" width="5" height="62" fill="#e5a425" />
    <rect x="518" y="646" width="214" height="62" fill="#fbae0b" />
    <path d="M838 293C825 299 815 307 809 322C801 334 798 350 796 367M793 347L796 367L803 352L798 354L796 366" stroke="#111" strokeWidth="1.200" fill="none" />
  </IconSvg>
);

/* ---------- data ---------- */
const menu: [string, string, number][] = [
  ["", "File", 33], ["", "Edit", 36], ["", "View", 41], ["", "Draw", 43], ["", "Layout", 52], ["Verif", "y", 46],
  ["", "Project", 53], ["", "Simulate", 62], ["", "Options", 58], ["", "Tools", 44], ["*", "Scripts", 51], ["", "Window", 60], ["", "Help", 40],
];
const treeRows: [number, string, string][] = [
  [0, "root", "Project"], [1, "notes", "Design Notes"], [1, "opts", "Project Options"], [1, "gdef", "Global Definitions"],
  [2, "xeq", "Global Definitions"], [1, "data", "Data Files"], [1, "sys", "System Diagrams"], [1, "sch", "Circuit Schematics"],
  [1, "net", "Netlists"], [1, "em", "EM Structures"], [1, "oeq", "Output Equations"], [1, "gra", "Graphs"],
  [1, "opt", "Optimizer Goals"], [1, "yld", "Yield Goals"], [1, "out", "Output Files"], [1, "sets", "Data Sets"],
  [1, "sym", "Circuit Symbols"], [1, "sf", "Simulation Filters"], [1, "sl", "Switch Lists"], [1, "wiz", "Wizards"],
  [2, "item", "Amplifier Model Generator"], [2, "item", "Component Synthesis"], [2, "item", "IFF Export"], [2, "item", "IFF Import"],
  [2, "item", "iFilter Filter Synthesis"], [2, "item", "Mixer and Multiplier Synthesis"], [2, "item", "Network Synthesis"],
  [2, "item", "OpenAccess Import/Export"], [2, "item", "PCB Import"], [2, "item", "Phased Array Generator"],
  [2, "item", "PHD Model Generator"], [2, "item", "RFP RF Planning Tool"], [2, "item", "Stability Analysis using STAN"],
  [2, "item", "Symbol Generator"], [2, "item", "VSS RF Budget Spreadsheet"], [0, "user", "User Folders"],
];
const rowY = (i: number) => 9.5 + i * 18;

const TreeOverlay = () => {
  const expanders: [number, number, boolean][] = [[12, 0, false], [33, 3, false], [33, 7, true], [33, 9, true], [33, 19, false], [54, 28, true]];
  const lvl1 = treeRows.map((r, i) => (r[0] === 1 ? i : -1)).filter((i) => i > 0);
  const lvl2 = treeRows.map((r, i) => (r[0] === 2 ? i : -1)).filter((i) => i > 0);
  const dot = { stroke: "#777", strokeDasharray: "1 1" };
  return (
    <TreeLines width={441} height={800} viewBox="0 0 441 800" fill="none">
      <path d={`M12.500 ${rowY(0)}V${rowY(35)}H24`} {...dot} />
      <path d={`M17 ${rowY(0)}H24`} {...dot} />
      <path d={`M33.500 18V${rowY(19)}`} {...dot} />
      {lvl1.map((i) => <path key={i} d={`M33.500 ${rowY(i)}H45`} {...dot} />)}
      <path d={`M54.500 ${rowY(3)}V${rowY(4)}M54.500 ${rowY(19)}V${rowY(34)}`} {...dot} />
      {lvl2.map((i) => <path key={i} d={`M54.500 ${rowY(i)}H66`} {...dot} />)}
      {expanders.map(([x, r, plus]) => (
        <g key={`${x}-${r}`}>
          <rect x={x - 4.5} y={rowY(r) - 4.5} width="9" height="9" fill="#f3f3f3" stroke="#8a8a8a" />
          <path d={`M${x - 2} ${rowY(r)}h5${plus ? `M${x + 0.5} ${rowY(r) - 2.5}v5` : ""}`} stroke="#333" />
        </g>
      ))}
      <path
        d="M68 112C50 123 36 141 29 163C28 176 35 186 50 196C70 204 90 210 133 210L163 209C172 201 176 191 175 183C178 166 178 156 177 149C176 141 172 138 170 136C160 128 155 125 147 121C130 116 90 113 68 112"
        stroke="#d9925a" strokeWidth="1"
      />
    </TreeLines>
  );
};

type T = string | { sep: number };
const renderTools = (items: T[], active?: string) =>
  items.map((it, i) =>
    typeof it === "string"
      ? <ToolBtn key={i} $active={it === active}>{tb[it]}</ToolBtn>
      : <Sep key={i} $w={it.sep} />
  );
const s6 = { sep: 6 };
const toolA: T[] = ["new", "open", "save", s6, "cut", "copy", "paste", "del", s6, "undo", "redo", "refresh", s6, "zoomA", "zoomO", "fit", s6, "newLay", s6, "y1", "y2", "y3", "y4", s6, "bolt", "boltA", "pause", s6, "prop", "veq", s6, "b1", "b2", "b3", s6, "wand"];
const toolB1: T[] = ["a1", "a2", "a3", s6, "b4", "b5", "b6", "b7", s6, "up", "down", s6];
const toolB2: T[] = [{ sep: 8 }, "db", s6, "ele", "sub", "p1", "p2", "p3", "ex1", "ex2", "ex3", "ex4"];

export default function App() {
  return (
    <Page>
      <Global />
      <TitleBar>
        <S w={16} h={16}><rect width="16" height="16" fill="#0e6db3" /><Tiny x="8" y="11" textAnchor="middle" $s={6.500} fill="#fff" fontStyle="italic">AWR</Tiny></S>
        <TitleText>Untitled Project - NI AWR Design Environment - [EM_PCB 1 (AXIEM - Async)]</TitleText>
        <WinControls>
          <WinBtn><IconSvg width={10} height={10} viewBox="0 0 10 10"><path d="M0 5.500h10" stroke="#222" /></IconSvg></WinBtn>
          <WinBtn><IconSvg width={10} height={10} viewBox="0 0 10 10" fill="none"><path d="M2.500 2.500V.5h7v7h-2M.5 2.500h7v7h-7z" stroke="#222" /></IconSvg></WinBtn>
          <WinBtn><X s={11} w={1} /></WinBtn>
        </WinControls>
      </TitleBar>

      <MenuBar>
        <MenuIcon><DocBlue /></MenuIcon>
        {menu.map(([pre, t, w]) => (
          <MenuItem key={t} $w={w}>
            {pre === "*" ? t : pre ? <>{pre}<u>{t}</u></> : <><u>{t[0]}</u>{t.slice(1)}</>}
          </MenuItem>
        ))}
        <MdiControls>
          <IconSvg width={10} height={10} viewBox="0 0 10 10"><path d="M1 8.500h7" stroke="#111" strokeWidth="2" /></IconSvg>
          <IconSvg width={10} height={10} viewBox="0 0 10 10" fill="none"><path d="M2.500 2.500V.5h7v5h-2M.5 3h7v6.500h-7z" stroke="#111" /></IconSvg>
          <X s={9} w={2} c="#111" />
        </MdiControls>
      </MenuBar>

      <ToolRow>
        <ToolBand><Grip />{renderTools(toolA)}<Overflow /></ToolBand>
        <ToolBand $ml={4}>
          <Grip />
          {renderTools(toolB1, "a2")}
          <Combo>Normal<DropArrow /></Combo>
          {renderTools(toolB2)}
          <Overflow $w={10} />
        </ToolBand>
      </ToolRow>

      <Workspace>
        <LeftColumn>
          <DockHeader>
            <ProjectIcon />
            <span>Project</span>
            <DockCtl><Pin /><X s={8} w={1.800} /></DockCtl>
          </DockHeader>
          <Tree>
            {treeRows.map(([l, ic, t], i) => (
              <TreeRow key={i} $level={l}>{tree[ic]}<span>{t}</span></TreeRow>
            ))}
            <TreeOverlay />
          </Tree>
          <PanelTabs>
            <PanelTab $active $w={63}><ProjectIcon />Project</PanelTab>
            <PanelTab $w={76}><ElementsIcon />Elements</PanelTab>
            <PanelTab $w={70}><LayoutIcon />Layout</PanelTab>
          </PanelTabs>
          <BottomTools>
            <ToolBand>
              <Grip />
              {["s1", "s2", "s3"].map((k) => <DropBtn key={k}>{tb[k]}<DropArrow /></DropBtn>)}
              <ToolBtn>{tb.s4}</ToolBtn>
              <Overflow />
            </ToolBand>
            <ToolBand $ml={5}>
              <Grip />
              {["r1", "r2", "r3", "r4"].map((k) => <DropBtn key={k}>{tb[k]}<DropArrow /></DropBtn>)}
              <ToolBtn>{tb.r5}</ToolBtn>
              <ToolBtn>{tb.r6}</ToolBtn>
              <Overflow $w={12} />
            </ToolBand>
          </BottomTools>
        </LeftColumn>

        <RightColumn>
          <DocPane>
            <TabStrip>
              <DocTab $w={62}>
                <TabOutline width={62} height={22} viewBox="0 0 62 22" fill="none"><path d="M0 22L16 1H62L50 22" fill="#f0f0f0" stroke="#9a9a9a" /></TabOutline>
                <TabContent><DocBlue /><span>PCP</span></TabContent>
              </DocTab>
              <DocTab $w={190} $active>
                <TabOutline width={190} height={22} viewBox="0 0 190 22" fill="none"><path d="M0 22L9 1H187Q189 1 189 3V22" fill="#fff" stroke="#9a9a9a" /></TabOutline>
                <TabContent><DocBlue /><span>EM_PCB 1 (AXIEM - Async)</span><TabClose><X s={9} w={1.400} /></TabClose></TabContent>
              </DocTab>
              <StripCtl>
                <IconSvg width={9} height={6} viewBox="0 0 9 6"><path d="M0 0h9L4.500 6z" fill="#111" /></IconSvg>
                <X s={9} w={1.600} />
              </StripCtl>
            </TabStrip>
            <DocBody>
              <CanvasWrap>
                <Board />
                <Note>Hexagon vias after<br />simplification</Note>
              </CanvasWrap>
              <VScroll>
                <Chevron d="M1 6l3.500-3.500L8 6" />
                <VThumb />
                <Chevron d="M1 3l3.500 3.500L8 3" />
              </VScroll>
            </DocBody>
            <HScroll>
              <Chevron d="M6 1L2.500 4.500 6 8" />
              <HThumb />
              <Chevron d="M3 1l3.500 3.500L3 8" />
            </HScroll>
          </DocPane>

          <StatusPane>
            <StatusHeader>
              <StatusIcon /><span>Status Window</span>
              <DockCtl><Pin /><X s={8} w={1.500} /></DockCtl>
            </StatusHeader>
            <StatusTools>
              <StatBtn $w={72} $gap={9}>{tb.copy}<span>Copy All</span></StatBtn>
              <Sep $w={6} />
              <StatBtn $w={22} $center><X s={12} w={1.300} c="#333" /></StatBtn>
              <StatBtn $w={22} $center><X s={12} w={1.300} c="#333" /></StatBtn>
              <Sep $w={6} />
              <ToolBtn $hi><StatusIcon /></ToolBtn>
              <Sep $w={9} />
              <StatBtn $w={69} $muted $gap={5}>
                <S w={15} h={15}><circle cx="7.500" cy="7.500" r="6.500" fill="#c9c9c9" /><path d="M5 5l5 5M10 5l-5 5" stroke="#fff" strokeWidth="1.500" /></S>
                <span>Errors (0)</span>
              </StatBtn>
              <Sep $w={9} />
              <StatBtn $w={89}><Warn /><span>Warnings (1)</span></StatBtn>
              <Sep $w={10} />
              <StatBtn $w={59} $gap={2}><Info /><span>Info (1)</span></StatBtn>
              <Sep $w={7} />
              <ToolBtn $hi>
                <S><path d="M6 3.500h8M6 8h8M6 12.500h8M2 3.500h2M2 8h2M2 12.500h2" stroke="#222" strokeWidth="1.300" /></S>
              </ToolBtn>
              <StatBtn $w={22}>
                <S w={18}><Tiny x="4" y="7" $s={7} fill="#3c6fb0">A</Tiny><Tiny x="4" y="14" $s={7} fill="#a03030">Z</Tiny><path d="M13 2v11M10.500 10.500L13 13.500l2.500-3" stroke="#333" /></S>
              </StatBtn>
            </StatusTools>
            <LogBody>
              <LogGroup>
                <S w={16} h={14}><path d="M1 1.500h5l1.500 1.500h7.500v10H1z" fill="#e5d98a" stroke="#555" /></S>
                PCB Import
              </LogGroup>
              <LogRow><Warn /><LogTime>8:17:39 PM</LogTime>Some components on TOP has pin numbers that do not match pin name. These might be mislabeled.</LogRow>
              <LogRow><Info /><LogTime>8:17:40 PM</LogTime>Total import time: 0.64 seconds</LogRow>
            </LogBody>
          </StatusPane>
        </RightColumn>
        <SideTab><TV s={21} /></SideTab>
      </Workspace>

      <StatusBar>
        <StatusMsg>TOP_LAYER[224],BOTTOM_LAYER[219],DRILL[214]</StatusMsg>
        <StatusCell $w={105} />
        <StatusCell $w={66}><span>x :</span><span>20.740</span></StatusCell>
        <StatusCell $w={68}><span>y :</span><span>31.336</span></StatusCell>
        <StatusCell $w={31}><span>mm</span></StatusCell>
        <StatusCell $w={27}><Warn /></StatusCell>
      </StatusBar>

      <TaskBar>
        <StartBtn>
          <IconSvg width={17} height={17} viewBox="0 0 17 17"><path d="M0 2.500L7 1.500V8H0zM8 1.300L17 0V8H8zM0 9H7V15.500L0 14.500zM8 9H17V17L8 15.700z" fill="#fff" /></IconSvg>
        </StartBtn>
        {task.map((t) => <TaskSlot key={t.n} $open={t.open} $cur={t.cur}>{t.el}</TaskSlot>)}
        <Tray>
          {tray.map((el, i) => <TraySlot key={i}>{el}</TraySlot>)}
          <Clock>8:31 PM<br />1/12/2020</Clock>
          <Notify>
            <S w={16} h={15}><path d="M.500.500h15v10H6l-3 4v-4H.500z" fill="#fff" /><path d="M3 3.500h10M3 6h10M3 8.500h7" stroke="#333" /></S>
            <NotifyBadge>5</NotifyBadge>
          </Notify>
        </Tray>
      </TaskBar>
    </Page>
  );
}
